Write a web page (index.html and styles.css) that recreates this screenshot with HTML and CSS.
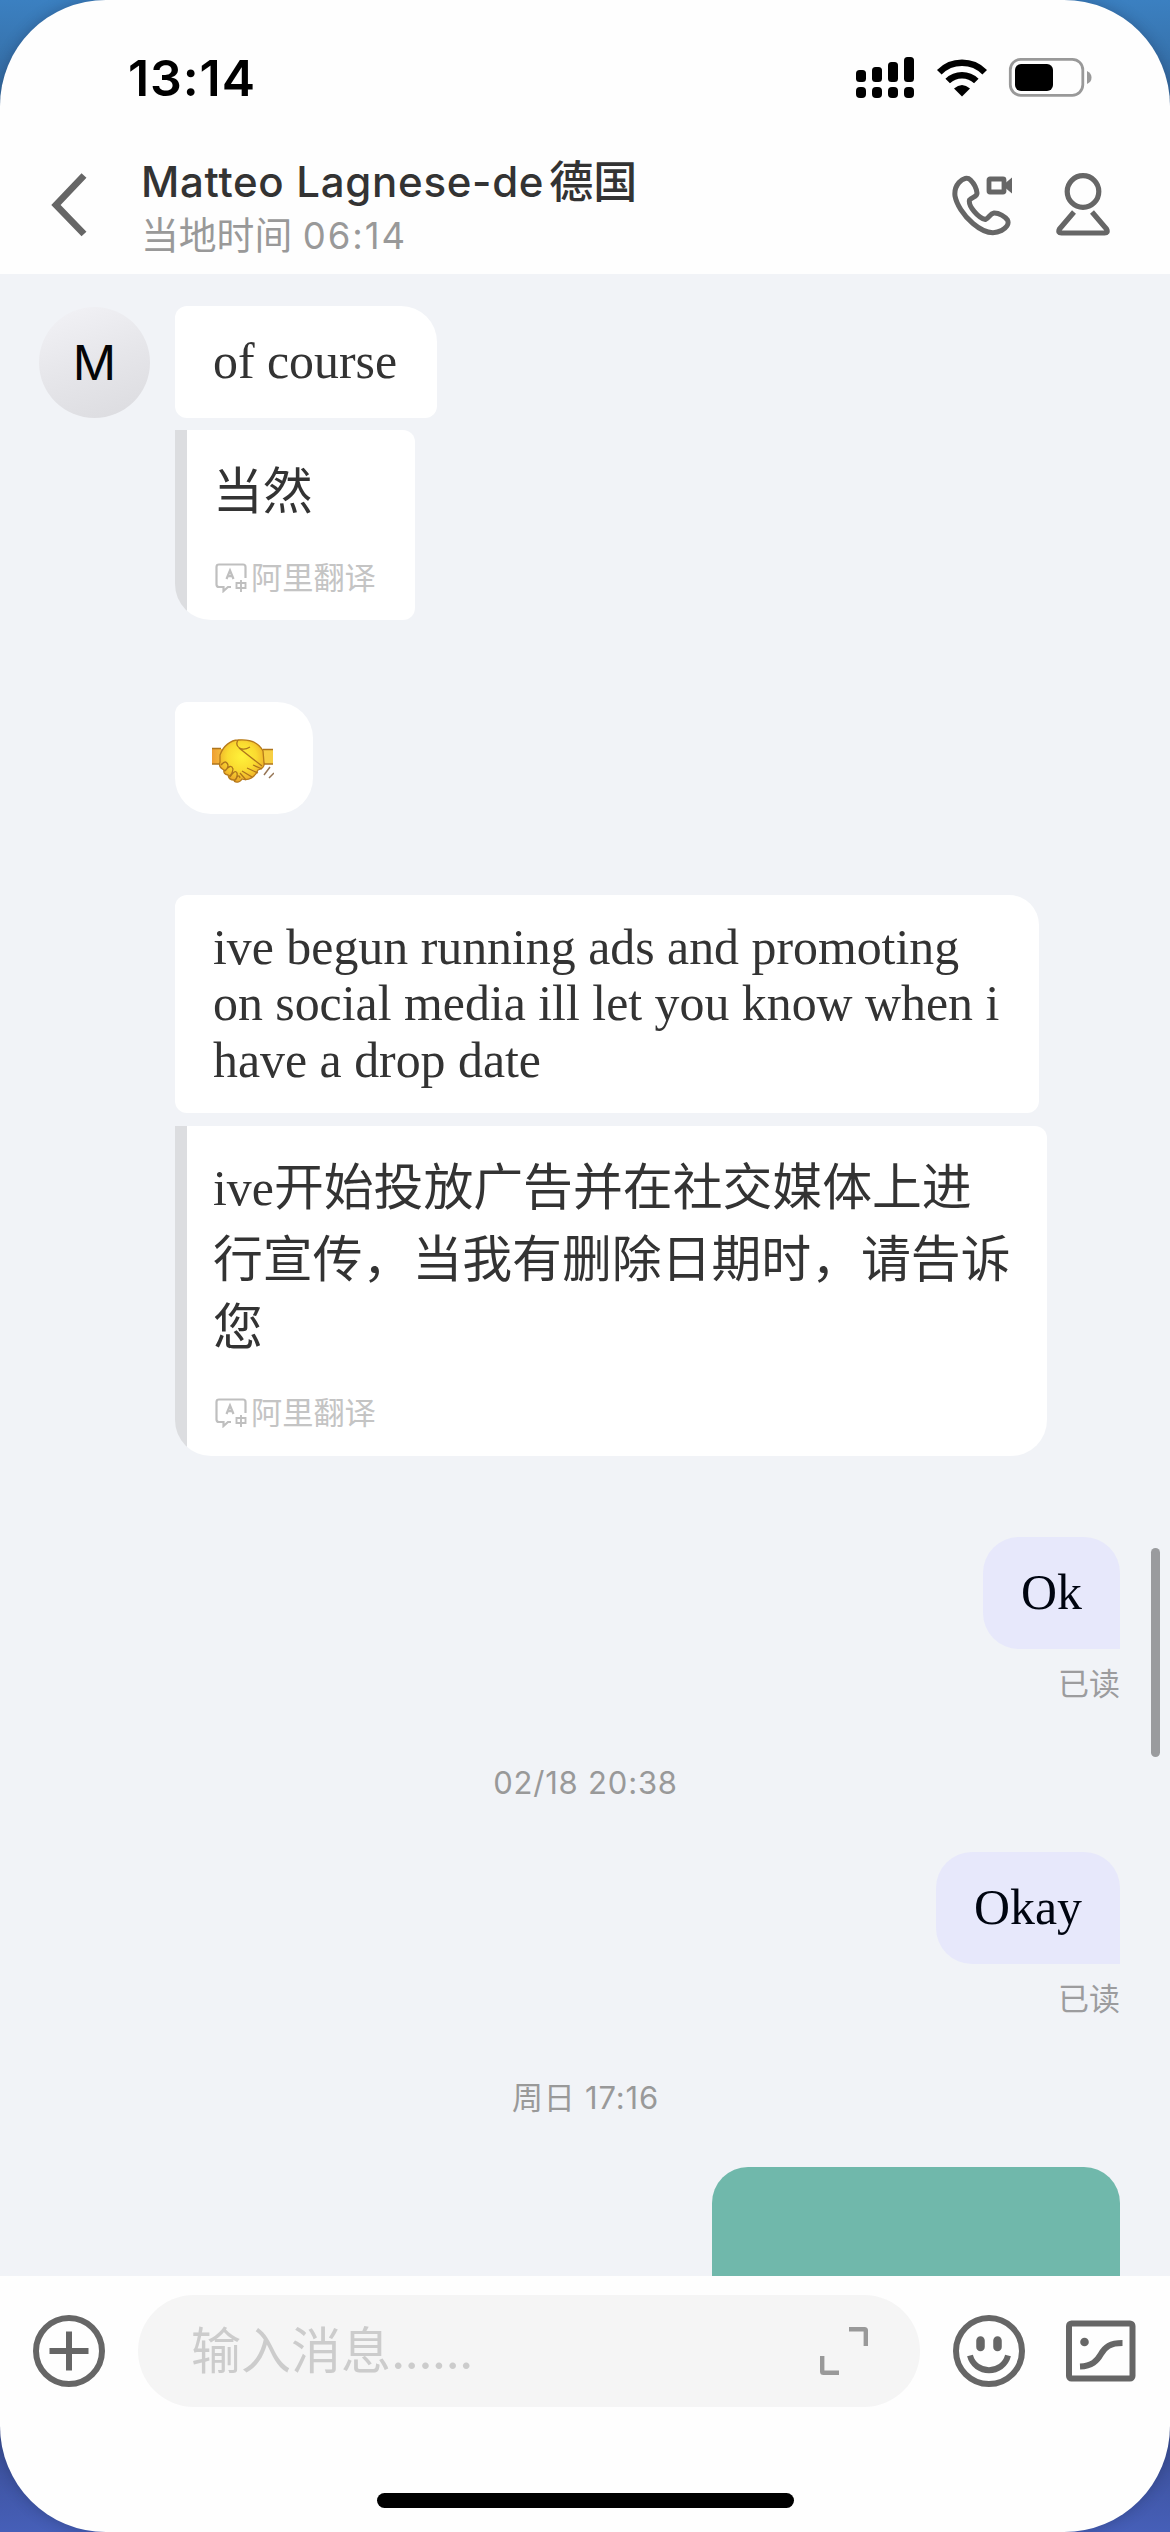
FILE: index.html
```html
<!DOCTYPE html>
<html lang="zh-CN">
<head>
<meta charset="utf-8">
<title>Matteo Lagnese-de德国</title>
<link rel="stylesheet" href="styles.css">
</head>
<body>
<svg width="0" height="0" class="defs" aria-hidden="true">
  <symbol id="translate" viewBox="0 0 32 30">
    <path d="M16 24H13L8.500 28V24H4Q1.500 24 1.500 21.500V4Q1.500 1.500 4 1.500H28Q30.500 1.500 30.500 4V15M11.500 16L15 7.500L18.500 16M12.800 13.200H17.200" fill="none" stroke="#bfbfbf" stroke-width="2.200"/>
    <path d="M21.500 20H30.500V25H21.500ZM26 17V29" fill="none" stroke="#bfbfbf" stroke-width="1.900"/>
  </symbol>
</svg>
<div class="phone">
  <div class="status">
    <span class="clock">13:14</span>
    <svg class="status-icons" viewBox="0 0 236 42" width="236" height="42">
      <g>
        <rect x="0" y="13" width="10" height="12" rx="3.500"/><rect x="16" y="10" width="10" height="15" rx="3.500"/><rect x="32" y="5" width="10" height="20" rx="3.500"/><rect x="48" y="0" width="10" height="25" rx="3.500"/>
        <rect x="0" y="30" width="10" height="11" rx="4"/><rect x="16" y="30" width="10" height="11" rx="4"/><rect x="32" y="30" width="10" height="11" rx="4"/><rect x="48" y="30" width="10" height="11" rx="4"/>
      </g>
      <g fill="none" stroke="#000" stroke-width="6.500">
        <path d="M83.300 15.300A32 32 0 0 1 128.700 15.300"/>
        <path d="M91.700 24A20.500 20.500 0 0 1 120.300 24"/>
      </g>
      <path d="M106 39.500L98 31.500Q106 24.500 114 31.500Z"/>
      <rect x="154.300" y="2.300" width="72.500" height="36" rx="10.500" fill="none" stroke="#999" stroke-width="2.800"/>
      <rect x="159" y="7" width="38" height="27" rx="6"/>
      <path d="M231 14Q235.500 16 235.500 20.500Q235.500 25 231 27Z" fill="#999"/>
    </svg>
  </div>
  <header class="header">
    <svg class="back" viewBox="0 0 40 66" width="40" height="66"><path d="M35 3.500L7 33L35 62" fill="none" stroke="#666" stroke-width="6.800"/></svg>
    <div class="who">
      <div class="name"><span class="latin">Matteo Lagnese-de</span><span class="han">德国</span></div>
      <div class="local">当地时间 <span class="local-time">06:14</span></div>
    </div>
    <svg class="call" viewBox="0 0 62 62" width="62" height="62">
      <path d="M7 7.500C11 3 15.500 2 18.500 5C22 8.500 24.500 13.500 25 18C25.200 21.500 20.500 22 17.500 25C16 31 26 43 33.500 44.500C37 43 38 38.500 42 38C47 37.800 53 41.500 55.500 45C57.500 49 54 53 49.500 55.500C41 60 31 57 21 48.500C11 40 4.500 29 3 21C2.400 16 3.500 11.500 7 7.500Z" fill="none" stroke="#666" stroke-width="5"/>
      <rect x="37" y="4" width="15" height="13" rx="1" fill="none" stroke="#666" stroke-width="4.800"/>
      <path d="M54 7.500L60 2.500V18.500L54 13.500Z" fill="#666"/>
    </svg>
    <svg class="person" viewBox="0 0 54 64" width="54" height="64">
      <g fill="none" stroke="#666" stroke-width="5.200"><circle cx="27" cy="18.500" r="15.800"/><path d="M18 39L3.500 56Q1.500 60 5.500 60H48.500Q52.500 60 50.500 56L36 39" stroke-linejoin="round"/></g>
    </svg>
  </header>
  <main class="chat">
    <section class="incoming">
      <div class="avatar">M</div>
      <div class="stack">
        <div class="bubble first one-line">of course</div>
        <div class="translation short">
          <p class="zh">当然</p>
          <div class="source"><svg width="32" height="30"><use href="#translate"/></svg>阿里翻译</div>
        </div>
        <div class="bubble emoji">
          <svg viewBox="0 0 62 44" width="62" height="44">
            <defs>
              <radialGradient id="hand" cx=".5" cy=".4" r=".65"><stop offset="0" stop-color="#fff23a"/><stop offset=".5" stop-color="#fadb30"/><stop offset="1" stop-color="#e99a26"/></radialGradient>
              <linearGradient id="cuff"><stop offset="0" stop-color="#ee9d32"/><stop offset="1" stop-color="#f6bd3e"/></linearGradient>
            </defs>
            <path d="M0 9L10 10V25L0 25Z" fill="url(#cuff)"/>
            <path d="M50 10H61V25H50Z" fill="#f7cf43"/>
            <path d="M8 16C11 7 19 1 26 1C38 0 47 4 51 12L52 24Q53 29 46 31C43 38 37 42 30 40C27 45 22 43 22 41Q17 41 16 36Q11 35 12 31Q6 28 8 23Z" fill="url(#hand)" stroke="#b77b1b" stroke-width="1.300"/>
            <path d="M0 9.500H9M51 10.500H61M0 25H7M52 25H61M26 1C22 8 30 13 38 8M27 9L50 27M35 29L46 34M30 32L40 38M28 34L34 41M41 26L50 30M9 26Q14 20 16 26Q16 30 12 32M13 32Q19 24 21 30Q20 36 17 37M18 38Q23 30 25 34Q26 39 22 42M23 41Q27 34 28 39" fill="none" stroke="#ae751c" stroke-width="1.300"/>
            <path d="M58 28L52 36M62 34L57 39" stroke="#967555" stroke-width="1.500"/>
          </svg>
        </div>
        <div class="bubble long">ive begun running ads and promoting<br>on social media ill let you know when i<br>have a drop date</div>
        <div class="translation wide">
          <p class="zh">ive开始投放广告并在社交媒体上进</p>
          <p class="zh">行宣传，当我有删除日期时，请告诉</p>
          <p class="zh last">您</p>
          <div class="source"><svg width="32" height="30"><use href="#translate"/></svg>阿里翻译</div>
        </div>
      </div>
    </section>
    <section class="outgoing">
      <div class="bubble mine one-line">Ok</div>
      <div class="read">已读</div>
    </section>
    <div class="date">02/18 20:38</div>
    <section class="outgoing second">
      <div class="bubble mine one-line">Okay</div>
      <div class="read">已读</div>
    </section>
    <div class="date weekday">周日 17:16</div>
    <div class="attachment"></div>
    <div class="scrollbar"></div>
  </main>
  <footer class="composer">
    <div class="tools">
      <svg class="plus" viewBox="0 0 72 72" width="72" height="72"><circle cx="36" cy="36" r="33" fill="none" stroke="#666" stroke-width="6"/><path d="M36 16.500V55.500M16.500 36H55.500" stroke="#666" stroke-width="6"/></svg>
      <div class="field">
        <span class="placeholder">输入消息<span class="dots">......</span></span>
        <svg class="expand" viewBox="0 0 48 48" width="48" height="48"><path d="M29 2.200H44.500Q45.800 2.200 45.800 3.500V19M2.200 29V44.500Q2.200 45.800 3.500 45.800H19" fill="none" stroke="#999" stroke-width="4.400"/></svg>
      </div>
      <svg class="smile" viewBox="0 0 72 72" width="72" height="72"><circle cx="36" cy="36" r="33" fill="none" stroke="#666" stroke-width="6"/><path d="M27.500 25.500V32M44.500 25.500V32" stroke="#666" stroke-width="8.500" stroke-linecap="round"/><path d="M17 40.500C22 60 50 60 55 40.500" fill="none" stroke="#666" stroke-width="6"/></svg>
      <svg class="picture" viewBox="0 0 70 62" width="70" height="62"><rect x="3" y="3.500" width="63.500" height="55" rx="2.500" fill="none" stroke="#666" stroke-width="6"/><circle cx="18.500" cy="22" r="4.300" fill="#666"/><path d="M14 46.500C26 46 31 41 35 34C39 27 44 23 56.500 23" fill="none" stroke="#666" stroke-width="6"/></svg>
    </div>
    <div class="home"></div>
  </footer>
</div>
</body>
</html>
```
FILE: styles.css
```css
* { box-sizing: border-box; }
body {
  margin: 0;
  width: 1170px;
  height: 2532px;
  overflow: hidden;
  background: linear-gradient(#3b80c1 0, #34699e 100px, #3a4d93 2430px, #465fb8 2532px);
  font-family: Inter, "Noto Sans CJK SC", sans-serif;
}
.defs { display: none; }
.phone {
  width: 1170px;
  height: 2532px;
  display: flex;
  flex-direction: column;
  border-radius: 106px;
  overflow: hidden;
  background: #fefefe;
  box-shadow: 0 0 14px rgba(20, 30, 60, .3);
}
.status {
  height: 156px;
  display: flex;
  justify-content: space-between;
  padding: 57px 78px 0 128px;
}
.clock {
  font-size: 50px;
  line-height: 42px;
  font-weight: 600;
  letter-spacing: .9px;
  color: #000;
}
.header {
  height: 118px;
  display: flex;
  padding-left: 49px;
}
.header svg { flex: none; }
.back { margin-top: 16px; }
.who { width: 811px; margin-left: 52px; }
.name {
  display: flex;
  height: 52px;
  line-height: 52px;
  color: #333;
  font-weight: 500;
  white-space: nowrap;
}
.latin { font-size: 42px; letter-spacing: .7px; }
.han { font-size: 44px; margin-left: 5px; }
.local { font-size: 37.800px; line-height: 54px; color: #999; white-space: nowrap; }
.local-time { font-size: 36.500px; letter-spacing: 1.900px; }
.call { margin-top: 19px; }
.person { margin: 17px 0 0 42px; }

.chat {
  position: relative;
  height: 2002px;
  display: flex;
  flex-direction: column;
  padding: 32px 50px 0 39px;
  overflow: hidden;
  background: #f1f3f7;
}
.incoming { display: flex; gap: 25px; }
.avatar {
  width: 111px;
  height: 111px;
  margin-top: 1px;
  border-radius: 50%;
  background: linear-gradient(160deg, #f0f0f4 10%, #e6e6ea 50%, #dcdce0 95%);
  font-size: 48px;
  line-height: 112px;
  text-align: center;
  color: #050507;
}
.stack { display: flex; flex-direction: column; align-items: flex-start; }
.bubble {
  padding: 25px 38px 24px;
  background: #fff;
  color: #333;
  font: 49.850px/56.300px "Liberation Serif", serif;
  white-space: nowrap;
}
.one-line { height: 112px; padding-top: 28px; }
.first { width: 262px; border-radius: 12px 36px 12px 12px; }
.translation {
  margin-top: 12px;
  padding: 27px 0 20px 38px;
  background: linear-gradient(90deg, #dcdde0 12px, #fff 12px);
}
.short { width: 240px; height: 190px; border-radius: 0 12px 12px 36px; }
.wide { width: 872px; height: 330px; margin-top: 13px; border-radius: 0 12px 36px 36px; }
.zh {
  margin: 0;
  color: #333;
  font: 49.850px/72px "Liberation Serif", "Noto Sans CJK SC", serif;
  white-space: nowrap;
}
.last { line-height: 63px; margin-bottom: 31px; }
.short .zh { margin-bottom: 27px; }
.source {
  display: flex;
  align-items: center;
  gap: 4px;
  height: 44px;
  padding-left: 2px;
  font-size: 31.200px;
  line-height: 44px;
  font-weight: 400;
  color: #c4c4c4;
}
.emoji {
  width: 138px;
  height: 112px;
  margin-top: 82px;
  padding: 37px 0 0 37px;
  line-height: 0;
  border-radius: 12px 36px 36px 36px;
}
.long { width: 864px; height: 218px; margin-top: 81px; border-radius: 12px 30px 12px 12px; }
.outgoing { display: flex; flex-direction: column; align-items: flex-end; margin-top: 81px; }
.mine { background: #e7e8fb; color: #000510; border-radius: 36px 36px 0 36px; }
.read { height: 46px; margin-top: 12px; font-size: 31px; line-height: 46px; color: #9c9c9e; }
.date {
  height: 46px;
  margin: 53px -12px 0 0;
  font-size: 31px;
  line-height: 46px;
  letter-spacing: .8px;
  text-align: center;
  color: #999;
}
.second { margin-top: 46px; }
.weekday { margin-top: 53px; }
.attachment {
  align-self: flex-end;
  width: 408px;
  height: 150px;
  margin-top: 46px;
  border-radius: 36px 36px 0 0;
  background: #70b8ab;
}
.scrollbar {
  position: absolute;
  left: 1151px;
  top: 1274px;
  width: 9px;
  height: 209px;
  border-radius: 5px;
  background: #9a9b9e;
}
.composer { height: 256px; display: flex; flex-direction: column; align-items: center; }
.tools {
  width: 100%;
  display: flex;
  align-items: center;
  padding: 19px 34px 0 33px;
}
.tools svg { flex: none; }
.field {
  display: flex;
  align-items: center;
  justify-content: space-between;
  width: 782px;
  height: 112px;
  margin-left: 33px;
  padding: 0 52px 1px 53px;
  border-radius: 56px;
  background: #f5f5f5;
}
.placeholder { font-size: 50px; line-height: 70px; font-weight: 400; color: #ccc; }
.dots { letter-spacing: -.8px; }
.smile { margin-left: 33px; }
.picture { margin-left: 41px; }
.home { width: 417px; height: 15px; margin-top: 86px; border-radius: 8px; background: #000; }
```
